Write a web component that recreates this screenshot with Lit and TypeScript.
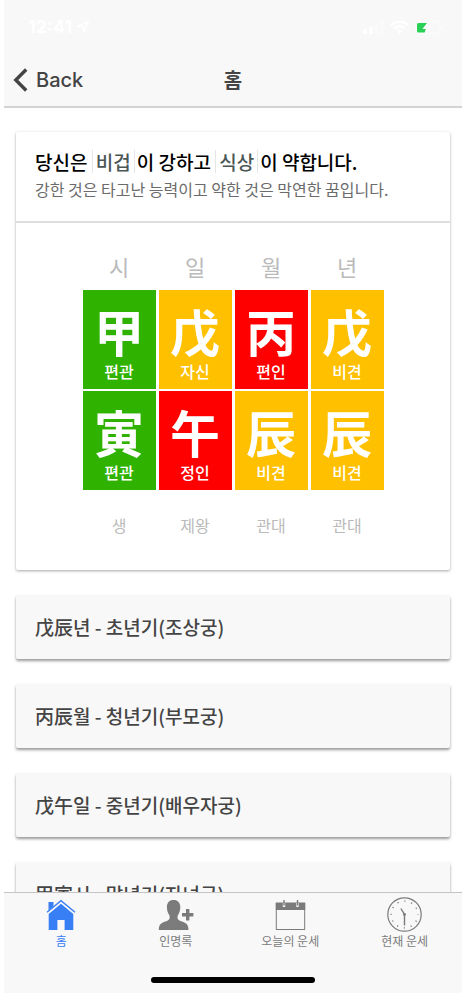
import { LitElement, html, svg, css } from "lit";
import { customElement, property } from "lit/decorators.js";
import { classMap } from "lit/directives/class-map.js";

type Phase = "wood" | "fire" | "earth";

interface Cell {
  hanja: string;
  role: string;
  phase: Phase;
}

const PILLARS = ["시", "일", "월", "년"];

const CELLS: Cell[] = [
  { hanja: "甲", role: "편관", phase: "wood" },
  { hanja: "戊", role: "자신", phase: "earth" },
  { hanja: "丙", role: "편인", phase: "fire" },
  { hanja: "戊", role: "비견", phase: "earth" },
  { hanja: "寅", role: "편관", phase: "wood" },
  { hanja: "午", role: "정인", phase: "fire" },
  { hanja: "辰", role: "비견", phase: "earth" },
  { hanja: "辰", role: "비견", phase: "earth" },
];

const STAGES = ["생", "제왕", "관대", "관대"];

const PERIODS = [
  "戊辰년 - 초년기(조상궁)",
  "丙辰월 - 청년기(부모궁)",
  "戊午일 - 중년기(배우자궁)",
  "甲寅시 - 말년기(자녀궁)",
];

const homeIcon = svg`
  <path d="M2.500 3h5v4.200l-5 4.400z" fill="currentColor"/>
  <path d="M1 13.200 15 1.600l14 11.600" fill="none" stroke="currentColor" stroke-width="1.400"/>
  <path d="M15 4.800 27.300 15v16H18.600V21h-7.200v10H2.700V15z" fill="currentColor"/>`;

const personIcon = svg`
  <path d="M15.500 1c4.300 0 6.800 2.700 6.800 7.200 0 3-.8 5.300-2 7.200-.6 1-.8 1.700-.8 2.800 0 2 .8 2.900 3.600 4 4.900 1.700 7.400 2.800 7.400 8.800H.8c0-6 2.500-7.100 7.400-8.800 2.800-1.100 3.500-2 3.500-4 0-1.100-.2-1.800-.8-2.800-1.200-1.900-2-4.200-2-7.200C8.900 3.700 11.300 1 15.500 1z" fill="currentColor"/>
  <path d="M29.700 10v11.400M24 15.700h11.400" stroke="currentColor" stroke-width="3.400"/>`;

const calendarIcon = svg`
  <path d="M.8 3.500h29.400V11H.8z" fill="currentColor"/>
  <path d="M1.300 4v26.500h28.400V4" fill="none" stroke="currentColor"/>
  <path d="M1 30.500h29" stroke="currentColor"/>
  <path d="M9 4v4M22.500 4v4" stroke="#f8f8f8" stroke-width="2.400"/>
  <path d="M9 1v5.500M22.500 1v5.500" stroke="currentColor" stroke-width="1.400"/>`;

const clockIcon = svg`
  <circle cx="17.500" cy="17.500" r="16.700" fill="none" stroke="currentColor" stroke-width="1.200"/>
  <circle cx="17.500" cy="17.500" r="13.400" fill="none" stroke="currentColor" stroke-width="1.400"
    stroke-dasharray="1.200 5.816" stroke-dashoffset=".6"/>
  <path d="M17.500 28.500v-11l-3.600-6" fill="none" stroke="currentColor" stroke-width="1.400"/>
  <circle cx="17.500" cy="17.500" r="1.400" fill="currentColor"/>`;

const TABS = [
  { label: "홈", width: 30, height: 32, icon: homeIcon },
  { label: "인명록", width: 36, height: 32, icon: personIcon },
  { label: "오늘의 운세", width: 31, height: 32, icon: calendarIcon },
  { label: "현재 운세", width: 35, height: 35, icon: clockIcon },
];

@customElement("saju-chart")
class SajuChart extends LitElement {
  static styles = css`
    :host {
      display: block;
    }
    .grid {
      display: grid;
      grid-template-columns: repeat(4, 73px);
      justify-content: center;
      gap: 2px 3px;
      text-align: center;
    }
    .pillar {
      color: #bababa;
      font-size: 22px;
      line-height: 32px;
      padding-bottom: 6px;
    }
    .cell {
      display: flex;
      flex-direction: column;
      gap: 3px;
      height: 99px;
      box-sizing: border-box;
      padding-top: 13px;
      color: #fff;
      font-weight: 500;
    }
    .hanja {
      font-size: 50px;
      font-weight: 700;
      line-height: 54px;
    }
    .role {
      font-size: 16px;
      line-height: 22px;
    }
    .wood {
      background: #30b200;
    }
    .fire {
      background: #ff0000;
    }
    .earth {
      background: #ffc000;
    }
    .stage {
      color: #bababa;
      font-size: 16px;
      line-height: 24px;
      padding-top: 21px;
    }
  `;

  render() {
    return html`
      <div class="grid">
        ${PILLARS.map((p) => html`<div class="pillar">${p}</div>`)}
        ${CELLS.map(
          (c) => html`
            <div class=${classMap({ cell: true, [c.phase]: true })}>
              <span class="hanja">${c.hanja}</span>
              <span class="role">${c.role}</span>
            </div>
          `
        )}
        ${STAGES.map((s) => html`<div class="stage">${s}</div>`)}
      </div>
    `;
  }
}

@customElement("tab-bar")
class TabBar extends LitElement {
  @property({ type: Number }) active = 0;

  static styles = css`
    :host {
      display: block;
      background: #f8f8f8;
      border-top: 1px solid #c4c4c4;
    }
    .tabs {
      display: grid;
      grid-template-columns: repeat(4, 1fr);
      height: 84px;
    }
    .tab {
      display: flex;
      flex-direction: column;
      align-items: center;
      color: #7b7b7b;
      text-decoration: none;
      font-size: 12px;
      line-height: 16px;
      padding-top: 3px;
    }
    .selected {
      color: #387ef5;
    }
    .icon {
      display: flex;
      align-items: center;
      height: 37px;
    }
    .foot {
      display: flex;
      padding-bottom: 10px;
    }
    .indicator {
      width: 164px;
      height: 6px;
      margin: 0 auto;
      border-radius: 3px;
      background: #000;
    }
  `;

  render() {
    return html`
      <nav class="tabs">
        ${TABS.map(
          (t, i) => html`
            <a href="#" class=${classMap({ tab: true, selected: i === this.active })}>
              <span class="icon">
                <svg width=${t.width} height=${t.height} viewBox="0 0 ${t.width} ${t.height}" aria-hidden="true">
                  ${t.icon}
                </svg>
              </span>
              ${t.label}
            </a>
          `
        )}
      </nav>
      <div class="foot"><div class="indicator"></div></div>
    `;
  }
}

@customElement("app-root")
class AppRoot extends LitElement {
  static styles = css`
    :host {
      display: flex;
      flex-direction: column;
      box-sizing: border-box;
      height: 100vh;
      padding: 0 0 7px 4px;
      background: #fff;
      font-family: "Noto Sans CJK KR", sans-serif;
      color: #444;
    }
    .top {
      flex: none;
      background: #f8f8f8;
      border-bottom: 2px solid #d3d3d3;
    }
    .status {
      display: flex;
      align-items: center;
      height: 54px;
      box-sizing: border-box;
      padding: 0 16px 0 24px;
      color: #fff;
      font-family: Inter, sans-serif;
      font-size: 18px;
      font-weight: 700;
      line-height: 24px;
    }
    .arrow {
      margin-left: 4px;
    }
    .signals {
      margin-left: auto;
    }
    .bar {
      display: grid;
      grid-template-columns: 1fr auto 1fr;
      align-items: center;
      height: 52px;
      padding-left: 9px;
    }
    .back {
      display: flex;
      align-items: center;
      gap: 8px;
      padding: 0;
      border: 0;
      background: none;
      color: #444;
      font: 500 20px/28px Inter, sans-serif;
    }
    .title {
      margin: 0;
      padding-right: 9px;
      font-size: 20px;
      font-weight: 700;
      line-height: 28px;
    }
    .content {
      flex: 1;
      min-height: 0;
      overflow: hidden;
      display: flex;
      flex-direction: column;
      gap: 25px;
      padding: 24px 12px 0;
    }
    .card {
      flex: none;
      border-radius: 2px;
      background: #fff;
      box-shadow: 0 1px 3px rgba(0, 0, 0, 0.35);
    }
    .summary {
      padding: 16px 19px 19px;
      border-bottom: 2px solid #dedede;
    }
    .headline {
      margin: 0;
      color: #000;
      font-size: 19px;
      font-weight: 500;
      line-height: 28px;
      white-space: nowrap;
    }
    .term {
      margin: 0 2px 0 0;
      padding: 0 3px;
      border: 0 solid #e6e6e6;
      border-width: 0 1px;
      background: none;
      color: #4a5656;
      font: inherit;
      line-height: 23px;
    }
    .note {
      margin: 0;
      color: #6b6b6b;
      font-size: 16px;
      line-height: 26px;
    }
    .chart {
      padding: 27px 0 33px;
    }
    .period {
      display: block;
      flex: none;
      height: 64px;
      padding: 0 19px;
      border: 0;
      border-radius: 2px;
      background: #f8f8f8;
      box-shadow: 0 2px 3px rgba(0, 0, 0, 0.4);
      color: #444;
      font: inherit;
      font-size: 19px;
      font-weight: 500;
      line-height: 28px;
      text-align: left;
    }
    .tabbar {
      flex: none;
    }
  `;

  render() {
    return html`
      <header class="top">
        <div class="status">
          <span>12:41</span>
          <svg class="arrow" width="14" height="14" viewBox="0 0 14 14" aria-hidden="true">
            <path d="M1.500 6.500 12.500 1.500 7.800 12.500V6.800z" fill="none" stroke="#fff" stroke-width="1.500" stroke-linejoin="round"/>
          </svg>
          <svg class="signals" width="84" height="16" viewBox="0 0 84 16" aria-hidden="true">
            <g fill="#fff">
              <rect x="1" y="10" width="4" height="5" rx="1"/>
              <rect x="7" y="8" width="4" height="7" rx="1"/>
              <rect x="12.500" y="5" width="4" height="10" rx="1" opacity=".3"/>
              <rect x="18" y="2" width="4" height="13" rx="1" opacity=".3"/>
            </g>
            <path d="M29 6.300a12 12 0 0 1 17 0M32 9.500a7.600 7.600 0 0 1 11 0" fill="none" stroke="#fff" stroke-width="2.500"/>
            <path d="M34.600 12a4.200 4.200 0 0 1 5.800 0l-2.900 3z" fill="#fff"/>
            <rect x="54" y="2.500" width="24" height="12" rx="3" fill="none" stroke="#fcfcfc"/>
            <path d="M80 6.500v4" stroke="#fcfcfc" stroke-width="1.500"/>
            <path d="M56.500 4H65l-4.500 6h3.200l-1 3.500h-6.200a1.500 1.500 0 0 1-1.500-1.500V5.500A1.500 1.500 0 0 1 56.500 4z" fill="#2bd157"/>
            <path d="M67 2.500 60.500 10h4l-1.500 5 6.500-7.500h-4z" fill="#fff"/>
          </svg>
        </div>
        <div class="bar">
          <button class="back" type="button">
            <svg width="15" height="24" viewBox="0 0 15 24" aria-hidden="true">
              <path d="M13.200 1.500 2.800 12l10.400 10.500" fill="none" stroke="#444" stroke-width="3.400"/>
            </svg>
            Back
          </button>
          <h1 class="title">홈</h1>
        </div>
      </header>

      <main class="content">
        <section class="card">
          <div class="summary">
            <h2 class="headline">
              당신은 <button class="term" type="button">비겁</button>이 강하고
              <button class="term" type="button">식상</button>이 약합니다.
            </h2>
            <p class="note">강한 것은 타고난 능력이고 약한 것은 막연한 꿈입니다.</p>
          </div>
          <saju-chart class="chart"></saju-chart>
        </section>
        ${PERIODS.map((p) => html`<button class="period" type="button">${p}</button>`)}
      </main>

      <tab-bar class="tabbar" .active=${0}></tab-bar>
    `;
  }
}
